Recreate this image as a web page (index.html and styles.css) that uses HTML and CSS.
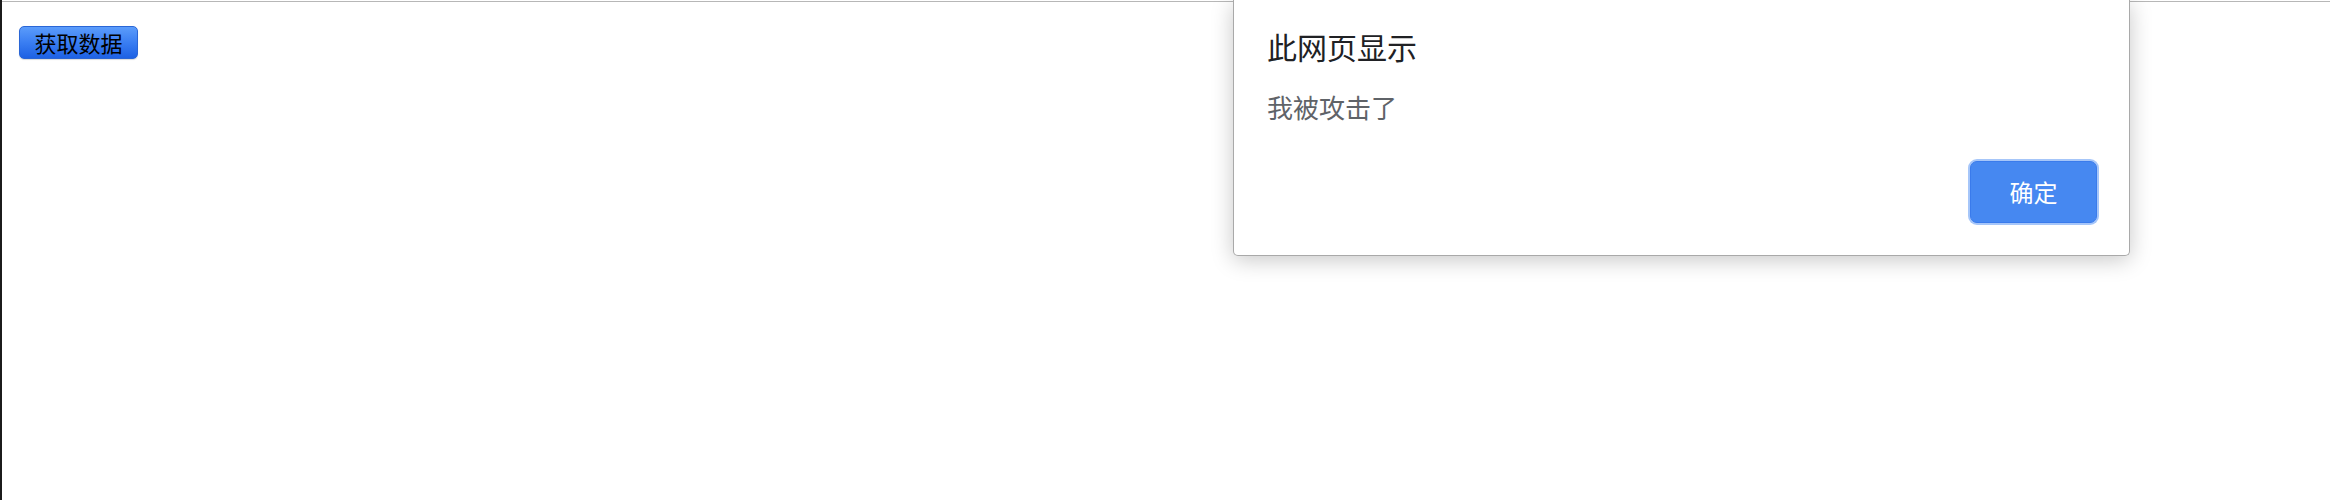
FILE: index.html
```html
<!DOCTYPE html>
<html lang="zh-CN">
<head>
<meta charset="utf-8">
<title>获取数据</title>
<link rel="stylesheet" href="styles.css">
</head>
<body>
<div class="frame">
  <div class="edge"></div>
  <main class="page">
    <button class="fetch-btn" type="button">获取数据</button>
  </main>
</div>
<div class="dialog" role="alertdialog">
  <div class="dialog-title">此网页显示</div>
  <div class="dialog-message">我被攻击了</div>
  <div class="dialog-actions">
    <button class="ok-btn" type="button">确定</button>
  </div>
</div>
</body>
</html>
```

FILE: styles.css
```css
html, body {
  margin: 0;
  padding: 0;
  background: #ffffff;
  font-family: "Noto Sans CJK SC", "Noto Sans", sans-serif;
}

.frame {
  display: flex;
  height: 500px;
}

.edge {
  width: 2px;
  background: #1b1b1b;
  flex: none;
}

.page {
  flex: 1;
  margin-top: 1px;
  border-top: 1px solid #b7b7b7;
  padding: 24px 0 0 17px;
}

.fetch-btn {
  width: 119px;
  height: 33px;
  padding: 0;
  border: 1px solid #2a66d6;
  border-radius: 5px;
  background: linear-gradient(to bottom, #5b9cfb 0%, #3a7ef2 50%, #1d61e4 100%);
  color: #000000;
  font-family: "Noto Sans CJK SC", sans-serif;
  font-size: 22px;
  line-height: 31px;
  box-shadow: 0 1px 1px rgba(0, 0, 0, 0.15);
}

.dialog {
  position: absolute;
  left: 1233px;
  top: 0;
  width: 897px;
  box-sizing: border-box;
  background: #ffffff;
  border: 1px solid #a9a9a9;
  border-top: none;
  border-radius: 0 0 5px 5px;
  box-shadow: 0 4px 22px rgba(0, 0, 0, 0.22);
  padding: 25px 30px 30px 33px;
  display: flex;
  flex-direction: column;
}

.dialog-title {
  font-size: 30px;
  line-height: 1.448;
  color: #202124;
}

.dialog-message {
  margin-top: 20px;
  font-size: 26px;
  line-height: 1.448;
  color: #5f6368;
}

.dialog-actions {
  display: flex;
  justify-content: flex-end;
  margin-top: 33px;
}

.ok-btn {
  width: 127px;
  height: 62px;
  margin: 2px;
  box-sizing: border-box;
  padding: 0;
  border: 1px solid #3a7bec;
  border-radius: 7px;
  background: #4688f1;
  box-shadow: 0 0 0 2px #a6c6f9;
  color: #ffffff;
  font-family: "Noto Sans CJK SC", sans-serif;
  font-size: 24px;
  line-height: 1;
}
```
